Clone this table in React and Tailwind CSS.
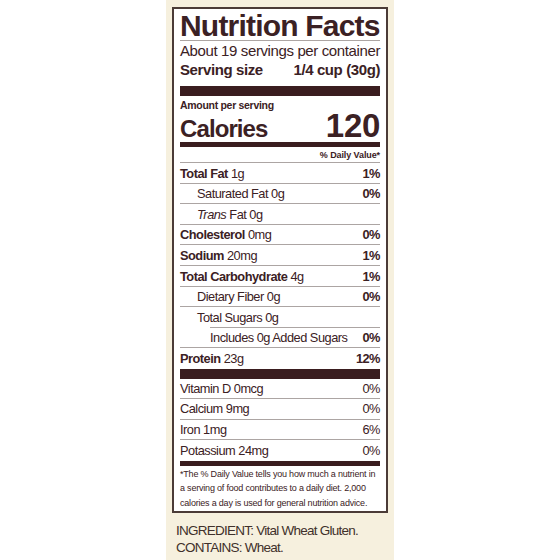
import React from "react";

const rows = [
  { label: "Total Fat", value: "1g", dv: "1%", bold: true, indent: 0 },
  { label: "Saturated Fat", value: "0g", dv: "0%", indent: 1 },
  { label: "Trans", italic: true, value: "Fat 0g", dv: "", indent: 1 },
  { label: "Cholesterol", value: "0mg", dv: "0%", bold: true, indent: 0 },
  { label: "Sodium", value: "20mg", dv: "1%", bold: true, indent: 0 },
  { label: "Total Carbohydrate", value: "4g", dv: "1%", bold: true, indent: 0 },
  { label: "Dietary Fiber", value: "0g", dv: "0%", indent: 1 },
  { label: "Total Sugars", value: "0g", dv: "", indent: 1, shortLine: true },
  { label: "Includes 0g Added Sugars", value: "", dv: "0%", indent: 2 },
  { label: "Protein", value: "23g", dv: "12%", bold: true, indent: 0, last: true },
];

const vitamins = [
  { label: "Vitamin D 0mcg", dv: "0%" },
  { label: "Calcium 9mg", dv: "0%" },
  { label: "Iron 1mg", dv: "6%" },
  { label: "Potassium 24mg", dv: "0%", last: true },
];

function NutrientRow({ row }) {
  const pad = row.indent === 2 ? "pl-[30px]" : row.indent === 1 ? "pl-[17px]" : "pl-0";
  return (
    <div className="relative h-[20.6px]">
      <div className={`flex h-[20.6px] items-center justify-between text-[12.8px] tracking-[-0.5px] ${pad}`}>
        <span>
          {row.bold ? (
            <span className="font-bold">{row.label}</span>
          ) : row.italic ? (
            <span className="italic">{row.label}</span>
          ) : (
            <span>{row.label}</span>
          )}
          {row.value && <span> {row.value}</span>}
        </span>
        <span className="font-bold">{row.dv}</span>
      </div>
      {!row.last && (
        <div
          className={`absolute bottom-0 right-0 h-px bg-[#aca5a3] ${
            row.shortLine ? "left-[30px]" : "left-0"
          }`}
        />
      )}
    </div>
  );
}

export default function App() {
  return (
    <div
      className="h-[560px] w-[560px] bg-white"
      style={{ fontFamily: '"Liberation Sans", Arial, sans-serif' }}
    >
      <div className="mx-auto h-[560px] w-[228px] bg-[#f6f0de] px-[6px] pt-[7px]">
        {/* Label */}
        <div className="border-2 border-[#4b3b37] bg-white px-[6px] text-[#3b2124]">
          <div className="h-[32px] border-b border-[#aca5a3] text-[30px] font-bold leading-[34px] tracking-[-0.8px]">
            Nutrition Facts
          </div>
          <div className="h-[19px] text-[15px] leading-[19px] tracking-[-0.38px]">
            About 19 servings per container
          </div>
          <div className="flex h-[19px] justify-between text-[15px] font-bold leading-[19px] tracking-[-0.4px]">
            <span>Serving size</span>
            <span>1/4 cup (30g)</span>
          </div>
          <div className="mt-[7px] h-[10px] bg-[#3a1d1f]" />

          <div className="mt-[3px] h-[13px] text-[10.5px] font-bold leading-[13px] tracking-[-0.3px]">
            Amount per serving
          </div>
          <div className="flex h-[30px] items-end justify-between font-bold">
            <span className="text-[24px] leading-[26px] tracking-[-0.9px]">Calories</span>
            <span className="text-[33px] leading-[33px] tracking-[-0.3px]">120</span>
          </div>
          <div className="h-[5px] bg-[#3a1d1f]" />
          <div className="h-[16px] border-b border-[#aca5a3] text-right text-[9px] font-bold leading-[16px] tracking-[-0.1px]">
            % Daily Value*
          </div>

          {rows.map((row) => (
            <NutrientRow key={row.label} row={row} />
          ))}

          <div className="h-[10px] bg-[#3a1d1f]" />

          {vitamins.map((v) => (
            <div
              key={v.label}
              className={`flex h-[20.4px] items-center justify-between text-[12.8px] tracking-[-0.5px] ${
                v.last ? "" : "border-b border-[#aca5a3]"
              }`}
            >
              <span>{v.label}</span>
              <span>{v.dv}</span>
            </div>
          ))}

          <div className="h-[5px] bg-[#3a1d1f]" />

          <p className="whitespace-nowrap pb-px pt-[1px] text-[9px] leading-[14.5px] tracking-[-0.2px]">
            *The % Daily Value tells you how much a nutrient in
            <br />
            a serving of food contributes to a daily diet. 2,000
            <br />
            calories a day is used for general nutrition advice.
          </p>
        </div>

        {/* Ingredients */}
        <div className="mt-[9px] pl-[4px] text-[13.5px] leading-[17px] tracking-[-0.75px] text-[#3f302b]">
          <div>INGREDIENT: Vital Wheat Gluten.</div>
          <div>CONTAINS: Wheat.</div>
        </div>
      </div>
    </div>
  );
}
